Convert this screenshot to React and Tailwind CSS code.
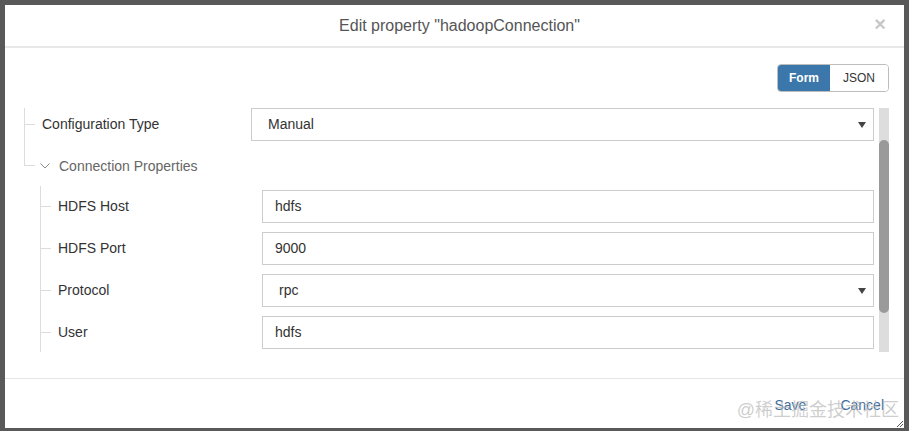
import React from 'react';

const Tick = () => <div className="w-[10px] h-px bg-[#dcdcdc] shrink-0" />;

const Caret = () => (
    <svg width="8" height="6" viewBox="0 0 8 6" className="shrink-0">
        <path d="M0 0 L8 0 L4 6 Z" fill="#444" />
    </svg>
);

const Field = ({ value, select, padLeft }) => (
    <div className={`flex-1 h-[33px] border border-[#cccccc] bg-white flex items-center justify-between ${padLeft} pr-[7px] text-[14px] text-[#333]`}>
        <span>{value}</span>
        {select && <Caret />}
    </div>
);

const NestedRow = ({ label, value, select }) => (
    <div className="flex items-center h-[33px]">
        <Tick />
        <span className="ml-[7px] w-[204px] text-[14px] text-[#333]">{label}</span>
        <Field value={value} select={select} padLeft={select ? 'pl-[16px]' : 'pl-[12px]'} />
    </div>
);

export default function App() {
    return (
        <div className="w-[909px] h-[431px] bg-[#595959] pt-[5px] pl-[5px]" style={{ fontFamily: '"Liberation Sans", Arial, sans-serif' }}>
            <div className="relative w-[899px] h-[423px] bg-white flex flex-col">
                {/* Header */}
                <div className="relative h-[43px] shrink-0 border-b-2 border-[#e8e8e8] flex items-center justify-center pl-[10px]">
                    <h3 className="text-[16px] text-[#555]">Edit property "hadoopConnection"</h3>
                    <span className="absolute right-[18px] top-[9px] text-[20px] font-bold text-[#c8c8c8] leading-none">×</span>
                </div>

                {/* Body */}
                <div className="flex flex-col">
                    <div className="flex justify-end pt-[16px] pr-[15px]">
                        <div className="flex h-[28px] rounded-[4px] border border-[#bdbdbd] overflow-hidden text-[12px]">
                            <div className="w-[52px] bg-[#3b77ab] text-white font-bold flex items-center justify-center">Form</div>
                            <div className="w-[58px] bg-white text-[#333] flex items-center justify-center">JSON</div>
                        </div>
                    </div>

                    <div className="flex mt-[16px] h-[244px]">
                        <div className="flex-1 overflow-hidden pl-[19px] pr-[5px]">
                            <div className="border-l border-[#dcdcdc]">
                                <div className="flex items-center h-[33px]">
                                    <Tick />
                                    <span className="ml-[7px] w-[209px] text-[14px] text-[#333]">Configuration Type</span>
                                    <Field value="Manual" select padLeft="pl-[16px]" />
                                </div>
                                <div className="h-[9px]" />
                            </div>
                            <div className="flex h-[32px]">
                                <div className="w-[11px] h-[16px] border-l border-b border-[#dcdcdc] shrink-0" />
                                <div className="flex items-center ml-[5px] text-[14px] text-[#666]">
                                    <svg width="10" height="6" viewBox="0 0 10 6" className="mr-[9px]">
                                        <path d="M0.5 0.5 L5 5 L9.5 0.5" fill="none" stroke="#888" strokeWidth="1" />
                                    </svg>
                                    Connection Properties
                                </div>
                            </div>
                            <div className="ml-[16px] mt-[4px] border-l border-[#dcdcdc] pt-[4px] pb-[4px] flex flex-col gap-[9px]">
                                <NestedRow label="HDFS Host" value="hdfs" />
                                <NestedRow label="HDFS Port" value="9000" />
                                <NestedRow label="Protocol" value="rpc" select />
                                <NestedRow label="User" value="hdfs" />
                            </div>
                        </div>
                        <div className="w-[10px] bg-[#dddddd] mr-[15px] pt-[32px]">
                            <div className="h-[173px] bg-[#9a9a9a] rounded-full" />
                        </div>
                    </div>
                </div>

                {/* Footer */}
                <div className="mt-auto h-[50px] border-t border-[#e5e5e5] flex items-center justify-end gap-[34px] pr-[20px] pt-[4px] text-[14px] text-[#3d6c9e]">
                    <span>Save</span>
                    <span>Cancel</span>
                </div>

                <span className="absolute right-[5px] bottom-[4px] text-[18px] text-[#b8b8b8]/70 pointer-events-none" style={{ fontFamily: '"Liberation Sans", "Noto Sans CJK SC", sans-serif' }}>@稀土掘金技术社区</span>
                <svg width="7" height="7" viewBox="0 0 7 7" className="absolute right-[1px] bottom-[1px]">
                    <path d="M1 7 L7 1 M4 7 L7 4" stroke="#555" strokeWidth="1" />
                </svg>
            </div>
        </div>
    );
}
